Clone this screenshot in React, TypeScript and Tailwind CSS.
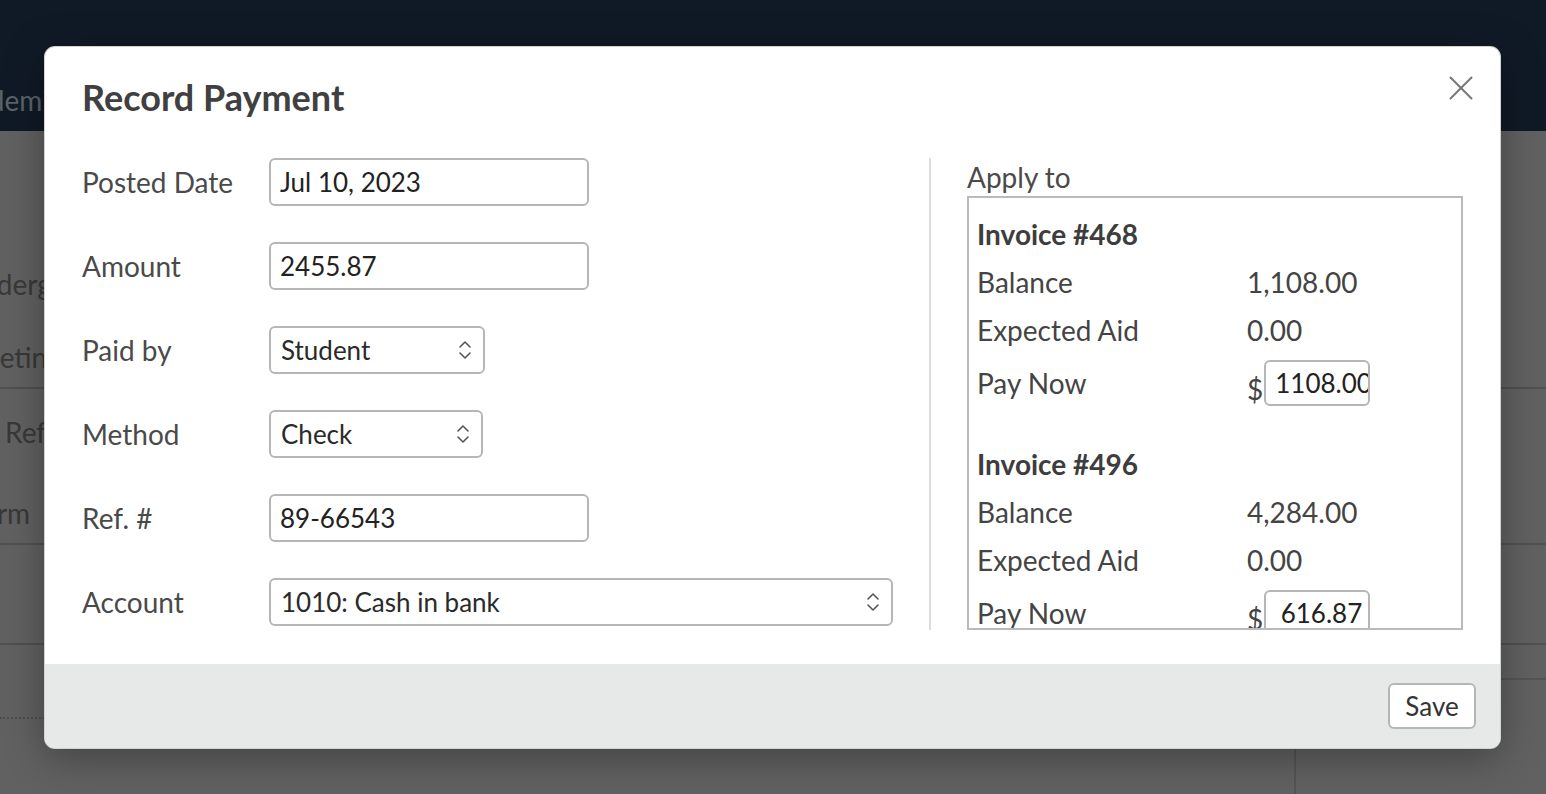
import React from "react";

function Chevrons() {
  return (
    <svg width="14" height="22" viewBox="0 0 14 22" fill="none" stroke="#555" strokeWidth="1.6" strokeLinecap="round" strokeLinejoin="round">
      <path d="M2 8 L7 3 L12 8" />
      <path d="M2 14 L7 19 L12 14" />
    </svg>
  );
}

function TextInput({ value, w }: { value: string; w: string }) {
  return (
    <div className={`${w} h-[48px] border-2 border-[#b6b6b6] rounded-[6px] bg-white px-[9px] flex items-center text-[26px] text-[#222] leading-none whitespace-nowrap`}>
      {value}
    </div>
  );
}

function Select({ value, w }: { value: string; w: string }) {
  return (
    <div className={`${w} h-[48px] border-2 border-[#b6b6b6] rounded-[6px] bg-white pl-[10px] pr-[11px] flex items-center justify-between text-[26px] text-[#2a2a2a] leading-none whitespace-nowrap`}>
      <span>{value}</span>
      <Chevrons />
    </div>
  );
}

function Invoice({ num, balance, pay, className }: { num: string; balance: string; pay: string; className?: string }) {
  return (
    <div className={`grid grid-cols-[270px_1fr] text-[28px] text-[#444] ${className ?? ""}`}>
      <div className="col-span-2 h-[48px] leading-[48px] font-bold text-[#3d3d3d]">Invoice #{num}</div>
      <div className="h-[48px] leading-[48px]">Balance</div>
      <div className="h-[48px] leading-[48px]">{balance}</div>
      <div className="h-[48px] leading-[48px]">Expected Aid</div>
      <div className="h-[48px] leading-[48px]">0.00</div>
      <div className="h-[58px] flex items-center">Pay Now</div>
      <div className="h-[58px] flex items-center gap-[1px]">
        <span className="mt-[12px] leading-none">$</span>
        <div className="w-[106px] h-[46px] border-2 border-[#b6b6b6] rounded-[6px] bg-white pl-[9px] pr-[6px] text-right overflow-hidden whitespace-nowrap text-[26px] leading-[42px] text-[#222]">
          {pay}
        </div>
      </div>
    </div>
  );
}

export default function App() {
  return (
    <div className="relative w-[1546px] h-[794px] overflow-hidden font-[Lato,sans-serif] bg-[#616161]">
      {/* Background page (dimmed) */}
      <div className="h-[131px] bg-[#101a26] pt-[83px]">
        <div className="ml-[-57px] text-[28px] leading-[34px] text-[#5d636a] whitespace-nowrap">Academics</div>
      </div>
      <div className="flex flex-col text-[28px] text-[#383838] whitespace-nowrap">
        <div className="h-[258px] border-b-2 border-[#505050] pt-[135px]">
          <div className="ml-[-39px] leading-[36px]">Undergraduate</div>
          <div className="ml-[-80px] mt-[37px] leading-[36px]">Completing</div>
        </div>
        <div className="h-[156px] border-b-2 border-[#505050] pt-[25px]">
          <div className="ml-[5px] leading-[36px]">Ref. #</div>
          <div className="ml-[-31px] mt-[45px] leading-[36px]">Term</div>
        </div>
        <div className="h-[100px] border-b-2 border-[#505050]"></div>
        <div className="flex">
          <div className="w-[1294px] pt-[72px]">
            <div className="border-b-2 border-dotted border-[#4e4e4e] w-[60px]"></div>
          </div>
          <div className="flex-1 mt-[33px] border-t-2 border-l-2 border-[#545454] h-[120px]"></div>
        </div>
      </div>

      {/* Modal */}
      <div className="absolute left-[45px] top-[47px] w-[1455px] h-[701px] rounded-[10px] bg-white overflow-hidden flex flex-col shadow-[0_0_0_1px_#d2d2d2,0_8px_40px_rgba(0,0,0,0.35)]">
        <div className="relative pt-[28px] pb-[39px] px-[37px]">
          <h1 className="text-[36px] leading-[44px] font-bold text-[#404040]">Record Payment</h1>
          <button className="absolute right-[27px] top-[29px] w-[24px] h-[24px]">
            <svg width="24" height="24" viewBox="0 0 24 24" fill="none" stroke="#777" strokeWidth="2" strokeLinecap="round">
              <path d="M1.5 1.5 L22.5 22.5" />
              <path d="M22.5 1.5 L1.5 22.5" />
            </svg>
          </button>
        </div>

        <div className="flex px-[37px] pb-[34px]">
          <div className="w-[811px] grid grid-cols-[187px_1fr] gap-y-[36px] items-center text-[28px] text-[#4a4a4a] self-start">
            <div className="h-[48px] leading-[48px]">Posted Date</div>
            <TextInput value="Jul 10, 2023" w="w-[320px]" />
            <div className="h-[48px] leading-[48px]">Amount</div>
            <TextInput value="2455.87" w="w-[320px]" />
            <div className="h-[48px] leading-[48px]">Paid by</div>
            <Select value="Student" w="w-[216px]" />
            <div className="h-[48px] leading-[48px]">Method</div>
            <Select value="Check" w="w-[214px]" />
            <div className="h-[48px] leading-[48px]">Ref. #</div>
            <TextInput value="89-66543" w="w-[320px]" />
            <div className="h-[48px] leading-[48px]">Account</div>
            <Select value="1010: Cash in bank" w="w-[624px]" />
          </div>

          <div className="ml-[36px] w-[2px] h-[472px] bg-[#dcdcdc]"></div>

          <div className="ml-[36px] w-[496px] flex flex-col">
            <div className="h-[38px] leading-[38px] text-[28px] text-[#4a4a4a]">Apply to</div>
            <div className="h-[434px] border-2 border-[#bababa] overflow-hidden pl-[8px] pt-[12px]">
              <Invoice num="468" balance="1,108.00" pay="1108.00" />
              <Invoice num="496" balance="4,284.00" pay="616.87" className="mt-[28px]" />
            </div>
          </div>
        </div>

        <div className="flex-1 bg-[#e7e9e8] flex items-center justify-end pr-[24px]">
          <button className="w-[88px] h-[46px] border-2 border-[#b6b6b6] rounded-[6px] bg-white text-[26px] leading-none text-[#333]">
            Save
          </button>
        </div>
      </div>
    </div>
  );
}
